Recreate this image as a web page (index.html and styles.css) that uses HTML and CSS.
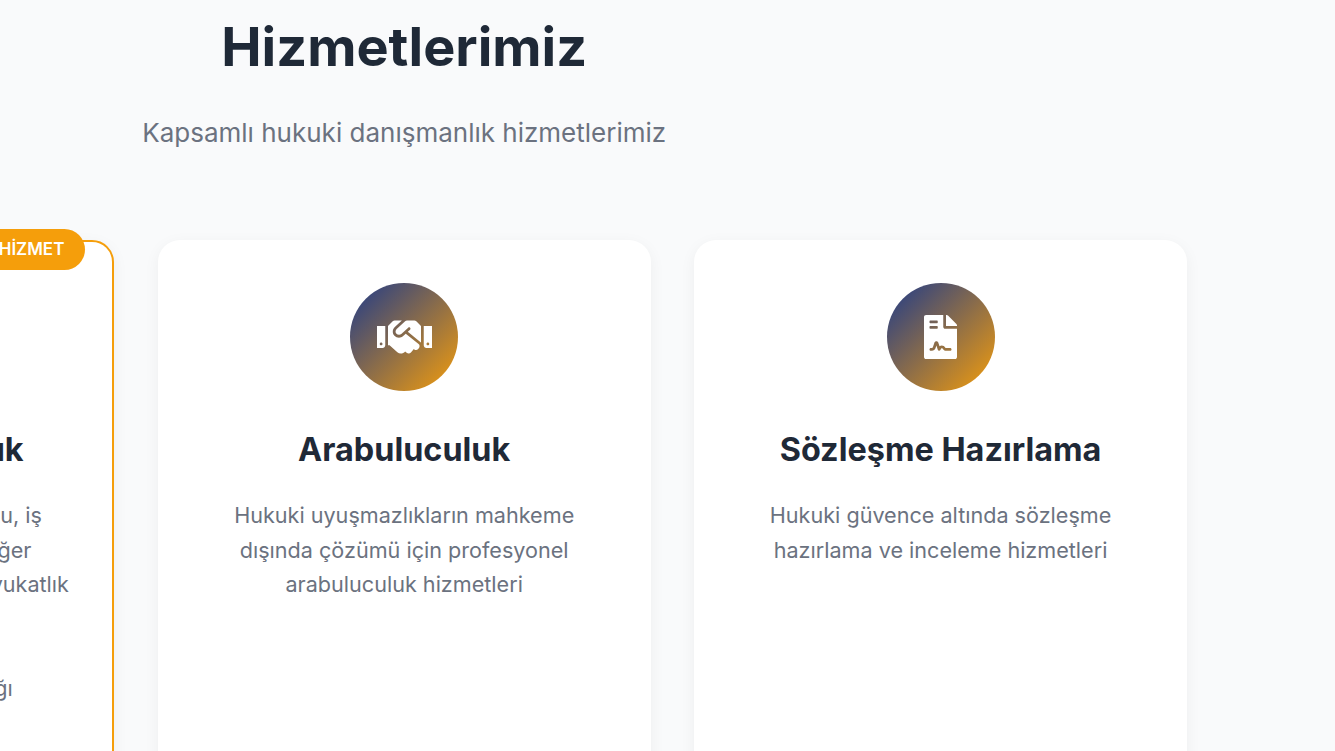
FILE: index.html
```html
<!DOCTYPE html>
<html lang="tr">
<head>
    <meta charset="UTF-8">
    <meta name="viewport" content="width=device-width, initial-scale=1.0">
    <title>Hizmetlerimiz</title>
    <link rel="stylesheet" href="styles.css">
</head>
<body>
    <div class="top-bar"></div>

    <main class="services">
        <header class="section-header">
            <h1>Hizmetlerimiz</h1>
            <p>Kapsamlı hukuki danışmanlık hizmetlerimiz</p>
        </header>

        <div class="service-grid">
            <article class="service-card featured">
                <span class="badge">ÖNE ÇIKAN HİZMET</span>
                <div class="service-icon"></div>
                <h2>Uluslar Arası Hukuk</h2>
                <p>Ceza hukuku, kurumsal hukuku, iş<br>hukuku, sigorta hukuku ve diğer<br>hukuk alanlarında profesyonel avukatlık<br>hizmetleri<br>sunuyoruz<br>kadromuzla tam bağımsızlığı</p>
            </article>

            <article class="service-card">
                <div class="service-icon">
                    <svg viewBox="0 0 640 512" width="55" height="44" fill="currentColor"><path d="M434.7 64h-85.9c-8 0-15.7 3-21.6 8.4l-98.3 90c-.1.1-.2.3-.3.4-16.6 15.6-16.3 40.5-2.1 56 12.7 13.9 39.4 17.6 56.1 2.7.1-.1.3-.1.4-.2l79.9-73.2c6.5-5.9 16.7-5.5 22.6 1 6 6.5 5.5 16.6-1 22.6l-26.1 23.9L504 313.8c2.9 2.4 5.5 5 7.9 7.7V128l-54.6-54.6c-5.9-6-14.1-9.4-22.6-9.4zM544 128.2v223.9c0 17.7 14.3 32 32 32h64V128.2h-96zm48 223.9c-8.8 0-16-7.2-16-16s7.2-16 16-16 16 7.2 16 16-7.2 16-16 16zM0 384h64c17.7 0 32-14.3 32-32V128.2H0V384zm48-63.9c8.8 0 16 7.2 16 16s-7.2 16-16 16-16-7.2-16-16c0-8.9 7.2-16 16-16zm435.9 18.6L334.6 217.5l-30 27.5c-29.7 27.1-75.2 24.5-101.7-4.4-26.9-29.4-24.8-74.9 4.4-101.7L289.1 64h-83.8c-8.5 0-16.6 3.4-22.6 9.4L128 128v223.9h18.3l90.5 81.9c27.4 22.3 67.7 18.1 90-9.3l.2-.2 17.9 15.5c15.9 13 39.4 10.5 52.3-5.4l31.4-38.6 5.4 4.4c13.7 11.1 33.9 9.1 45-4.7l9.5-11.7c11.2-13.8 9.1-33.9-4.6-45.1z"/></svg>
                </div>
                <h2>Arabuluculuk</h2>
                <p>Hukuki uyuşmazlıkların mahkeme dışında çözümü için profesyonel arabuluculuk hizmetleri</p>
            </article>

            <article class="service-card">
                <div class="service-icon">
                    <svg viewBox="0 0 384 512" width="33" height="44" fill="currentColor"><path d="M224 136V0H24C10.7 0 0 10.7 0 24v464c0 13.3 10.7 24 24 24h336c13.3 0 24-10.7 24-24V160H248c-13.2 0-24-10.8-24-24zM64 72c0-4.42 3.58-8 8-8h80c4.42 0 8 3.58 8 8v16c0 4.42-3.58 8-8 8H72c-4.42 0-8-3.58-8-8V72zm0 64c0-4.42 3.58-8 8-8h80c4.42 0 8 3.58 8 8v16c0 4.42-3.58 8-8 8H72c-4.42 0-8-3.58-8-8v-16zm192.81 248H304c8.84 0 16 7.16 16 16s-7.16 16-16 16h-47.19c-16.45 0-31.27-9.14-38.64-23.86-2.95-5.92-8.09-6.52-10.17-6.52s-7.22.59-10.02 6.19l-7.67 15.34a15.986 15.986 0 0 1-14.31 8.84c-.38 0-.75-.02-1.14-.05-6.45-.45-12-4.75-14.03-10.89L144 354.59l-10.61 31.88c-5.89 17.66-22.38 29.53-41 29.53H80c-8.84 0-16-7.16-16-16s7.16-16 16-16h12.39c4.83 0 9.11-3.08 10.64-7.66l18.19-54.64c3.3-9.81 12.44-16.41 22.78-16.41s19.48 6.59 22.77 16.41l13.88 41.64c19.77-16.19 54.05-9.7 66 14.16 2.02 4.06 5.96 6.5 10.16 6.5zM377 105L279.1 7c-4.5-4.5-10.6-7-17-7H256v128h128v-6.1c0-6.3-2.5-12.4-7-16.9z"/></svg>
                </div>
                <h2>Sözleşme Hazırlama</h2>
                <p>Hukuki güvence altında sözleşme hazırlama ve inceleme hizmetleri</p>
            </article>
        </div>
    </main>
</body>
</html>
```

FILE: styles.css
```css
html, body {
    height: 100%;
    overflow: hidden;
}

body {
    margin: 0;
    font-family: Inter, "Liberation Sans", sans-serif;
    background-color: #f9fafb;
}

.top-bar {
    height: 0;
    box-shadow: 0 2px 10px rgba(0, 0, 0, 0.12);
}

.services {
    width: 1566px;
    margin-left: -378.8px;
}

.section-header {
    width: 700px;
    margin-left: 433px;
    padding-top: 13px;
    text-align: center;
}

.section-header h1 {
    margin: 0;
    font-size: 54px;
    line-height: 68px;
    font-weight: 700;
    color: #1f2937;
}

.section-header p {
    margin: 32px 0 0;
    font-size: 26px;
    line-height: 40px;
    color: #6b7280;
}

.service-grid {
    display: grid;
    grid-template-columns: repeat(3, 493.2px);
    gap: 43.2px;
    margin-top: 87px;
}

.service-card {
    position: relative;
    height: 620px;
    box-sizing: border-box;
    padding: 43px;
    background-color: white;
    border-radius: 22px;
    box-shadow: 0 4px 16px rgba(0, 0, 0, 0.05);
    text-align: center;
}

.service-card.featured {
    border: 2px solid #f59e0b;
    padding: 41px;
}

.badge {
    position: absolute;
    top: -13px;
    right: 27px;
    padding: 0 21px;
    height: 41px;
    line-height: 41px;
    border-radius: 21px;
    background-color: #f59e0b;
    color: white;
    font-size: 17px;
    font-weight: 600;
    white-space: nowrap;
}

.service-icon {
    display: flex;
    align-items: center;
    justify-content: center;
    width: 108px;
    height: 108px;
    margin: 0 auto;
    border-radius: 50%;
    background: linear-gradient(135deg, #1e3a8a, #f59e0b);
    color: white;
}

.service-card h2 {
    margin: 37px 0 0;
    font-size: 32.4px;
    line-height: 44px;
    font-weight: 700;
    color: #1f2937;
}

.service-card p {
    margin: 26px 0 0;
    font-size: 21.6px;
    line-height: 34.56px;
    color: #6b7280;
}
```
